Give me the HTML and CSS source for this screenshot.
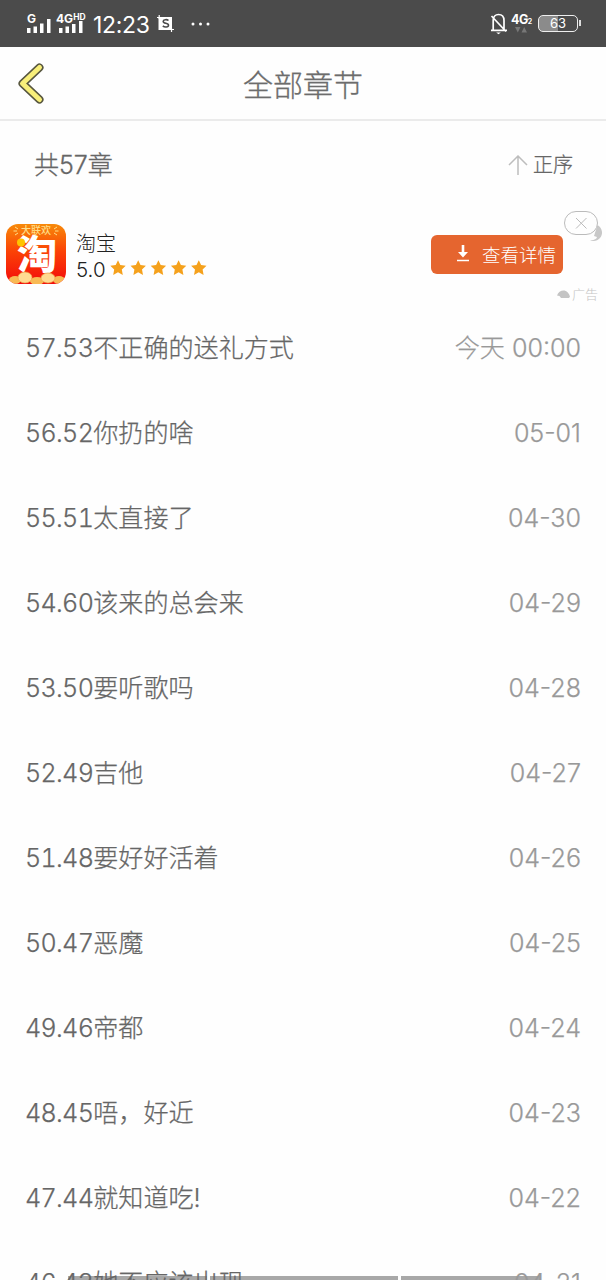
FILE: index.html
```
<!DOCTYPE html>
<html lang="zh-CN">
<head>
    <meta charset="UTF-8">
    <meta name="viewport" content="width=device-width, initial-scale=1.0">
    <title>全部章节</title>
    <link rel="stylesheet" href="styles.css">
</head>
<body>
    <div class="status-bar">
        <div class="signal">
            <span class="net">G</span>
            <svg width="26" height="16" viewBox="0 0 26 16" fill="#fff"><path d="M0 11h3.500v5H0zM6.500 9.500H10V16H6.500zM13 6.500h3.500V16H13zM20 2h3.500v14H20z"/></svg>
        </div>
        <div class="signal signal-hd">
            <span class="net">4G<small>HD</small></span>
            <svg width="26" height="16" viewBox="0 0 26 16" fill="#fff"><path d="M0 11h3.500v5H0zM6.500 9.500H10V16H6.500zM13 7h3.500v9H13zM20 4h3.500v12H20z"/></svg>
        </div>
        <span class="clock">12:23</span>
        <svg class="shot" width="17" height="17" viewBox="0 0 17 17">
            <path d="M1.500 2h13.500v13H1.500z" fill="#fff"/>
            <path d="M0 2.500h4M2.200 0v4M13 14.500h4M14.500 13v4" stroke="#fff" stroke-width="1.200"/>
            <path d="M11.500 5.500C10 4.200 6.200 4.400 6.200 6.500c0 2.400 5.300 1.200 5.300 3.700 0 2.200-4 2.300-5.700.7" fill="none" stroke="#4b4b4b" stroke-width="1.600"/>
        </svg>
        <svg class="dots" width="20" height="4" viewBox="0 0 20 4" fill="#fff"><circle cx="2" cy="2" r="1.500"/><circle cx="9.500" cy="2" r="1.500"/><circle cx="17" cy="2" r="1.500"/></svg>
        <div class="status-right">
            <svg width="18" height="22" viewBox="0 0 18 22" fill="none" stroke="#fff" stroke-width="1.700">
                <path d="M3.200 17V7.500C3.200 3.500 5.500 1.500 8.500 1.500s5.500 2 5.500 6V17M1 17.300h16M1.500 3l14.500 15.500"/>
                <path d="M6.200 19.500h4.600l-2.300 1.700z" fill="#fff" stroke="none"/>
            </svg>
            <div class="data">
                <span class="net">4G<sub>2</sub></span>
                <svg width="12" height="6" viewBox="0 0 12 6" fill="#777"><path d="M0 0h5.500L2.800 5.500zM6.500 5.500H12L9.200 0z"/></svg>
            </div>
            <div class="battery"><span>63</span></div>
        </div>
    </div>

    <header class="title-bar">
        <svg class="back" width="28" height="42" viewBox="0 0 28 42" fill="none" stroke-linecap="round" stroke-linejoin="round">
            <path d="M22.500 4.500L5.500 20.500l17 16" stroke="#57563f" stroke-width="8"/>
            <path d="M22.500 4.500L5.500 20.500l17 16" stroke="#f8ef7a" stroke-width="5"/>
        </svg>
        <h1>全部章节</h1>
    </header>

    <div class="summary">
        <span>共57章</span>
        <div class="order">
            <svg width="20" height="20" viewBox="0 0 20 20" fill="none" stroke="#bdbdbd" stroke-width="1.500"><path d="M10 20V1.500M1 10l9-9 9 9"/></svg>
            <span>正序</span>
        </div>
    </div>

    <div class="ad">
        <svg class="ad-icon" width="60" height="60" viewBox="0 0 60 60">
            <defs>
                <linearGradient id="bg" x1="0" y1="0" x2="0" y2="1">
                    <stop offset="0" stop-color="#f78a0a"/>
                    <stop offset=".45" stop-color="#fb4306"/>
                    <stop offset="1" stop-color="#f30a0b"/>
                </linearGradient>
                <clipPath id="round"><rect width="60" height="60" rx="12"/></clipPath>
            </defs>
            <g clip-path="url(#round)">
                <rect width="60" height="60" fill="url(#bg)"/>
                <text class="icon-top" x="30" y="10" text-anchor="middle">大联欢</text>
                <path d="M9 3l3 2M7.500 7h3.500M9 11l3-2M51 3l-3 2M52.500 7H49M51 11l-3-2" stroke="#ffdf8a"/>
                <text class="icon-main" x="31" y="44.500" text-anchor="middle">淘</text>
                <circle cx="15" cy="18.500" r="4" fill="#ffc400"/>
                <g fill="#f8ba55">
                    <ellipse cx="9" cy="56" rx="6" ry="4"/><ellipse cx="31" cy="57" rx="7" ry="4"/><ellipse cx="53" cy="56" rx="6" ry="4"/>
                </g>
                <g fill="#ffdb91" stroke="#eda348" stroke-width=".7">
                    <ellipse cx="19" cy="53.500" rx="7" ry="5.500"/><ellipse cx="42" cy="54" rx="7" ry="5"/>
                </g>
            </g>
        </svg>
        <div class="ad-info">
            <div class="ad-name">淘宝</div>
            <div class="rating">
                <span>5.0</span>
                <svg width="98" height="16" viewBox="0 0 98 16" fill="#f5a11c">
                    <defs><path id="star" d="M8 .2l2.300 4.900 5.400.7-3.900 3.700 1 5.500L8 12.300 3.200 15l1-5.500L.3 5.800l5.400-.7z"/></defs>
                    <use href="#star"/><use href="#star" x="20.200"/><use href="#star" x="40.400"/><use href="#star" x="60.600"/><use href="#star" x="80.800"/>
                </svg>
            </div>
        </div>
        <a class="detail">
            <svg width="14" height="18" viewBox="0 0 14 18" fill="#fff"><path d="M5.700 0h2.600v7H12l-5 5.500L2 7h3.700zM1 14.700h12v1.500H1z"/></svg>
            <span>查看详情</span>
        </a>
        <svg class="close" width="40" height="34" viewBox="0 0 40 34" fill="none">
            <path d="M33.500 15c5 3 6 9 2.500 13-3 3.500-7 3.500-10 2 3.500.3 6.500-.5 7-3l-3-1z" fill="#c8c8c8"/>
            <rect x=".5" y="1.500" width="33" height="23" rx="11.500" fill="#fefefe" stroke="#bbb"/>
            <path d="M12 8l10.500 10.500M22.500 8L12 18.500" stroke="#bbb"/>
        </svg>
        <div class="ad-tag">
            <svg width="13" height="9" viewBox="0 0 13 9" fill="#c4c4c4"><path d="M0 5.500C1 2 4.500 0 7.500.5 10 1 12 3.500 13 6.500L12 8H4L2.500 6z"/></svg>
            <span>广告</span>
        </div>
    </div>

    <ul class="chapters">
        <li><span><b>57.53</b>不正确的送礼方式</span><time>今天 00:00</time></li>
        <li><span><b>56.52</b>你扔的啥</span><time>05-01</time></li>
        <li><span><b>55.51</b>太直接了</span><time>04-30</time></li>
        <li><span><b>54.60</b>该来的总会来</span><time>04-29</time></li>
        <li><span><b>53.50</b>要听歌吗</span><time>04-28</time></li>
        <li><span><b>52.49</b>吉他</span><time>04-27</time></li>
        <li><span><b>51.48</b>要好好活着</span><time>04-26</time></li>
        <li><span><b>50.47</b>恶魔</span><time>04-25</time></li>
        <li><span><b>49.46</b>帝都</span><time>04-24</time></li>
        <li><span><b>48.45</b>唔，好近</span><time>04-23</time></li>
        <li><span><b>47.44</b>就知道吃!</span><time>04-22</time></li>
        <li><span><b>46.43</b>她不应该出现</span><time>04-21</time></li>
    </ul>

    <div class="nav-hint"><i></i><i></i><i></i></div>
</body>
</html>
```
FILE: styles.css
```
* {
    box-sizing: border-box;
}
body {
    position: relative;
    z-index: 0;
    margin: 0;
    height: 1280px;
    overflow: hidden;
    background: #fefefe;
    color: #666;
    font-family: Inter, "Noto Sans CJK SC", sans-serif;
    font-weight: 300;
}
svg {
    display: block;
    flex: none;
}

/* status bar */
.status-bar {
    display: flex;
    align-items: center;
    height: 47px;
    padding: 0 28px 0 27px;
    background: #4b4b4b;
    color: #fff;
}
.signal {
    position: relative;
    width: 32px;
    height: 22px;
    padding-top: 4px;
}
.net {
    font-size: 12px;
    line-height: 11px;
    font-weight: 700;
}
.signal .net {
    position: absolute;
    left: 0;
    top: 0;
}
.signal-hd {
    width: 34px;
}
.signal-hd .net {
    left: -3px;
    top: -1px;
    white-space: nowrap;
}
.net small {
    font-size: 8.5px;
    vertical-align: 3px;
}
.clock {
    width: 64px;
    font-size: 23px;
    font-weight: 400;
    line-height: 28px;
    letter-spacing: -0.3px;
    padding-top: 3px;
}
.dots {
    margin-left: 17px;
}
.status-right {
    display: flex;
    align-items: center;
    margin-left: auto;
}
.data {
    width: 30px;
    padding: 0 0 0 3px;
}
.data .net {
    display: block;
    font-size: 12.5px;
    height: 13px;
    letter-spacing: -0.5px;
    white-space: nowrap;
}
.data sub {
    font-size: 7px;
    vertical-align: 0;
}
.data svg {
    margin-left: 4px;
}
.battery {
    position: relative;
    width: 40px;
    height: 17px;
    border: 1.5px solid #eee;
    border-radius: 5px;
    background: linear-gradient(90deg, #8b8b8b 50%, #4b4b4b 50%);
    font-size: 13px;
    font-weight: 400;
    line-height: 15px;
    text-align: center;
}
.battery::after {
    content: "";
    position: absolute;
    right: -4px;
    top: 4px;
    width: 2px;
    height: 6px;
    background: #ddd;
}

/* title */
.title-bar {
    display: flex;
    align-items: center;
    height: 74px;
    padding: 2px 17px 0;
    border-bottom: 2px solid #ebebeb;
}
.title-bar h1 {
    flex: 1;
    margin: 2px 28px 0 0;
    text-align: center;
    font-size: 30px;
    font-weight: 300;
    line-height: 40px;
    color: #6c6c6c;
    -webkit-text-stroke: 0.3px;
}

.summary {
    display: flex;
    align-items: center;
    justify-content: space-between;
    height: 88px;
    padding: 0 33px 0 34px;
    font-size: 25px;
    line-height: 36px;
    -webkit-text-stroke: 0.3px;
}
.order {
    display: flex;
    align-items: center;
    gap: 5px;
    font-size: 20px;
}

/* ad */
.ad {
    position: relative;
    display: flex;
    align-items: center;
    height: 96px;
    padding: 0 43px 6px 6px;
    color: #222;
}
.icon-top {
    font-size: 10px;
    font-weight: 500;
    fill: #ffdf8a;
}
.icon-main {
    font-size: 40px;
    font-weight: 900;
    fill: #fff;
}
.ad-info {
    margin-left: 10px;
    padding-top: 5px;
}
.ad-name {
    font-size: 20px;
    line-height: 26px;
}
.rating {
    display: flex;
    align-items: center;
    gap: 4px;
    font-size: 20.5px;
    line-height: 26px;
}
.rating svg {
    margin-top: -4px;
}
.detail {
    display: flex;
    align-items: center;
    gap: 12px;
    width: 132px;
    height: 39px;
    margin-left: auto;
    padding: 0 0 1px 25px;
    border-radius: 6px;
    background: #e5652f;
    color: #fff;
    font-size: 18.5px;
    white-space: nowrap;
}
.close {
    position: absolute;
    right: 2px;
    top: 1px;
}
.ad-tag {
    position: absolute;
    right: 8px;
    top: 76px;
    display: flex;
    align-items: center;
    gap: 2px;
    font-size: 13px;
    line-height: 18px;
    color: #c4c4c4;
}

/* chapter list */
.chapters {
    margin: 0;
    padding: 1px 25px 0;
    list-style: none;
}
.chapters li {
    display: flex;
    justify-content: space-between;
    height: 85px;
    font-size: 25.1px;
    line-height: 85px;
    white-space: nowrap;
    -webkit-text-stroke: 0.25px;
}
.chapters b {
    font-weight: 300;
    font-variant-numeric: tabular-nums;
    letter-spacing: -0.7px;
}
.chapters time {
    color: #999;
}

/* system gesture bars, under the list */
.nav-hint {
    position: absolute;
    z-index: -1;
    left: 68px;
    bottom: 0;
    display: flex;
    gap: 3px;
}
.nav-hint i {
    width: 139px;
    height: 4px;
    background: #a8a8a8;
}
.nav-hint i:nth-child(2) {
    width: 188px;
}
```
